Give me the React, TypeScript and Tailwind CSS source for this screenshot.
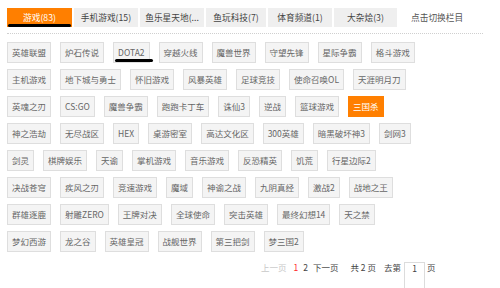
const tabs = [
  { label: '游戏(83)', w: 'w-[65px]', active: true },
  { label: '手机游戏(15)', w: 'w-[64px]' },
  { label: '鱼乐星天地(...', w: 'w-[64px]' },
  { label: '鱼玩科技(7)', w: 'w-[60px]' },
  { label: '体育频道(1)', w: 'w-[64px]' },
  { label: '大杂烩(3)', w: 'w-[63px]' },
];

const rows: string[][] = [
  ['英雄联盟', '炉石传说', 'DOTA2', '穿越火线', '魔兽世界', '守望先锋', '星际争霸', '格斗游戏'],
  ['主机游戏', '地下城与勇士', '怀旧游戏', '风暴英雄', '足球竞技', '使命召唤OL', '天涯明月刀'],
  ['英魂之刃', 'CS:GO', '魔兽争霸', '跑跑卡丁车', '诛仙3', '逆战', '篮球游戏', '三国杀'],
  ['神之浩劫', '无尽战区', 'HEX', '桌游密室', '高达文化区', '300英雄', '暗黑破坏神3', '剑网3'],
  ['剑灵', '棋牌娱乐', '天谕', '掌机游戏', '音乐游戏', '反恐精英', '饥荒', '行星边际2'],
  ['决战苍穹', '疾风之刃', '竞速游戏', '魔域', '神谕之战', '九阴真经', '激战2', '战地之王'],
  ['群雄逐鹿', '射雕ZERO', '王牌对决', '全球使命', '突击英雄', '最终幻想14', '天之禁'],
  ['梦幻西游', '龙之谷', '英雄皇冠', '战舰世界', '第三把剑', '梦三国2'],
];

const active = '三国杀';

export default function App() {
  return (
    <div className="relative w-[500px] h-[288px] overflow-hidden bg-white font-['Noto_Sans_CJK_SC',sans-serif] text-[8.5px]">
      <div className="pl-[7px] pt-[8px]">
        {/* 栏目切换 */}
        <div className="flex items-center gap-[2px]">
          {tabs.map((t) => (
            <div
              key={t.label}
              className={`${t.w} h-[19px] flex items-center justify-center whitespace-nowrap text-[8.7px] ${
                t.active ? 'bg-[#ff7f00] text-white' : 'bg-[#efefef] text-[#444]'
              }`}
            >
              {t.label}
            </div>
          ))}
          <span className="ml-[12px] text-[8.7px] text-[#555]">点击切换栏目</span>
        </div>

        <div className="mt-[6px] w-[476px] border-t border-dotted border-[#cfcfcf]" />

        {/* 游戏标签 */}
        <div className="mt-[8px] flex flex-col gap-[6px]">
          {rows.map((row, i) => (
            <div key={i} className="flex gap-[9px]">
              {row.map((name) => (
                <div
                  key={name}
                  className={`h-[21px] px-[4px] flex items-center whitespace-nowrap border ${
                    name === active
                      ? 'bg-[#ff7f00] border-[#ff7f00] text-white'
                      : 'bg-[#f4f4f4] border-[#dedede] text-[#666]'
                  }`}
                >
                  {name}
                </div>
              ))}
            </div>
          ))}
        </div>

        {/* 分页 */}
        <div className="mt-[10px] ml-[254px] flex items-start leading-[11px]">
          <span className="text-[#c8c8c8]">上一页</span>
          <span className="ml-[7px] text-[#ff2a2a]">1</span>
          <span className="ml-[5px] text-[#444]">2</span>
          <span className="ml-[5px] text-[#444]">下一页</span>
          <span className="ml-[12px] text-[#444]">共 2 页</span>
          <span className="ml-[8px] text-[#444]">去第</span>
          <div className="ml-[3px] w-[21px] h-[27px] border border-[#dcdcdc] text-center text-[#444]">1</div>
          <span className="ml-[2px] text-[#444]">页</span>
        </div>
      </div>

      {/* 标注线 */}
      <div className="absolute left-[8px] top-[24px] w-[63px] h-[3px] rounded-full bg-black" />
      <div className="absolute left-[115px] top-[59px] w-[38px] h-[3px] rounded-full bg-black" />
    </div>
  );
}
